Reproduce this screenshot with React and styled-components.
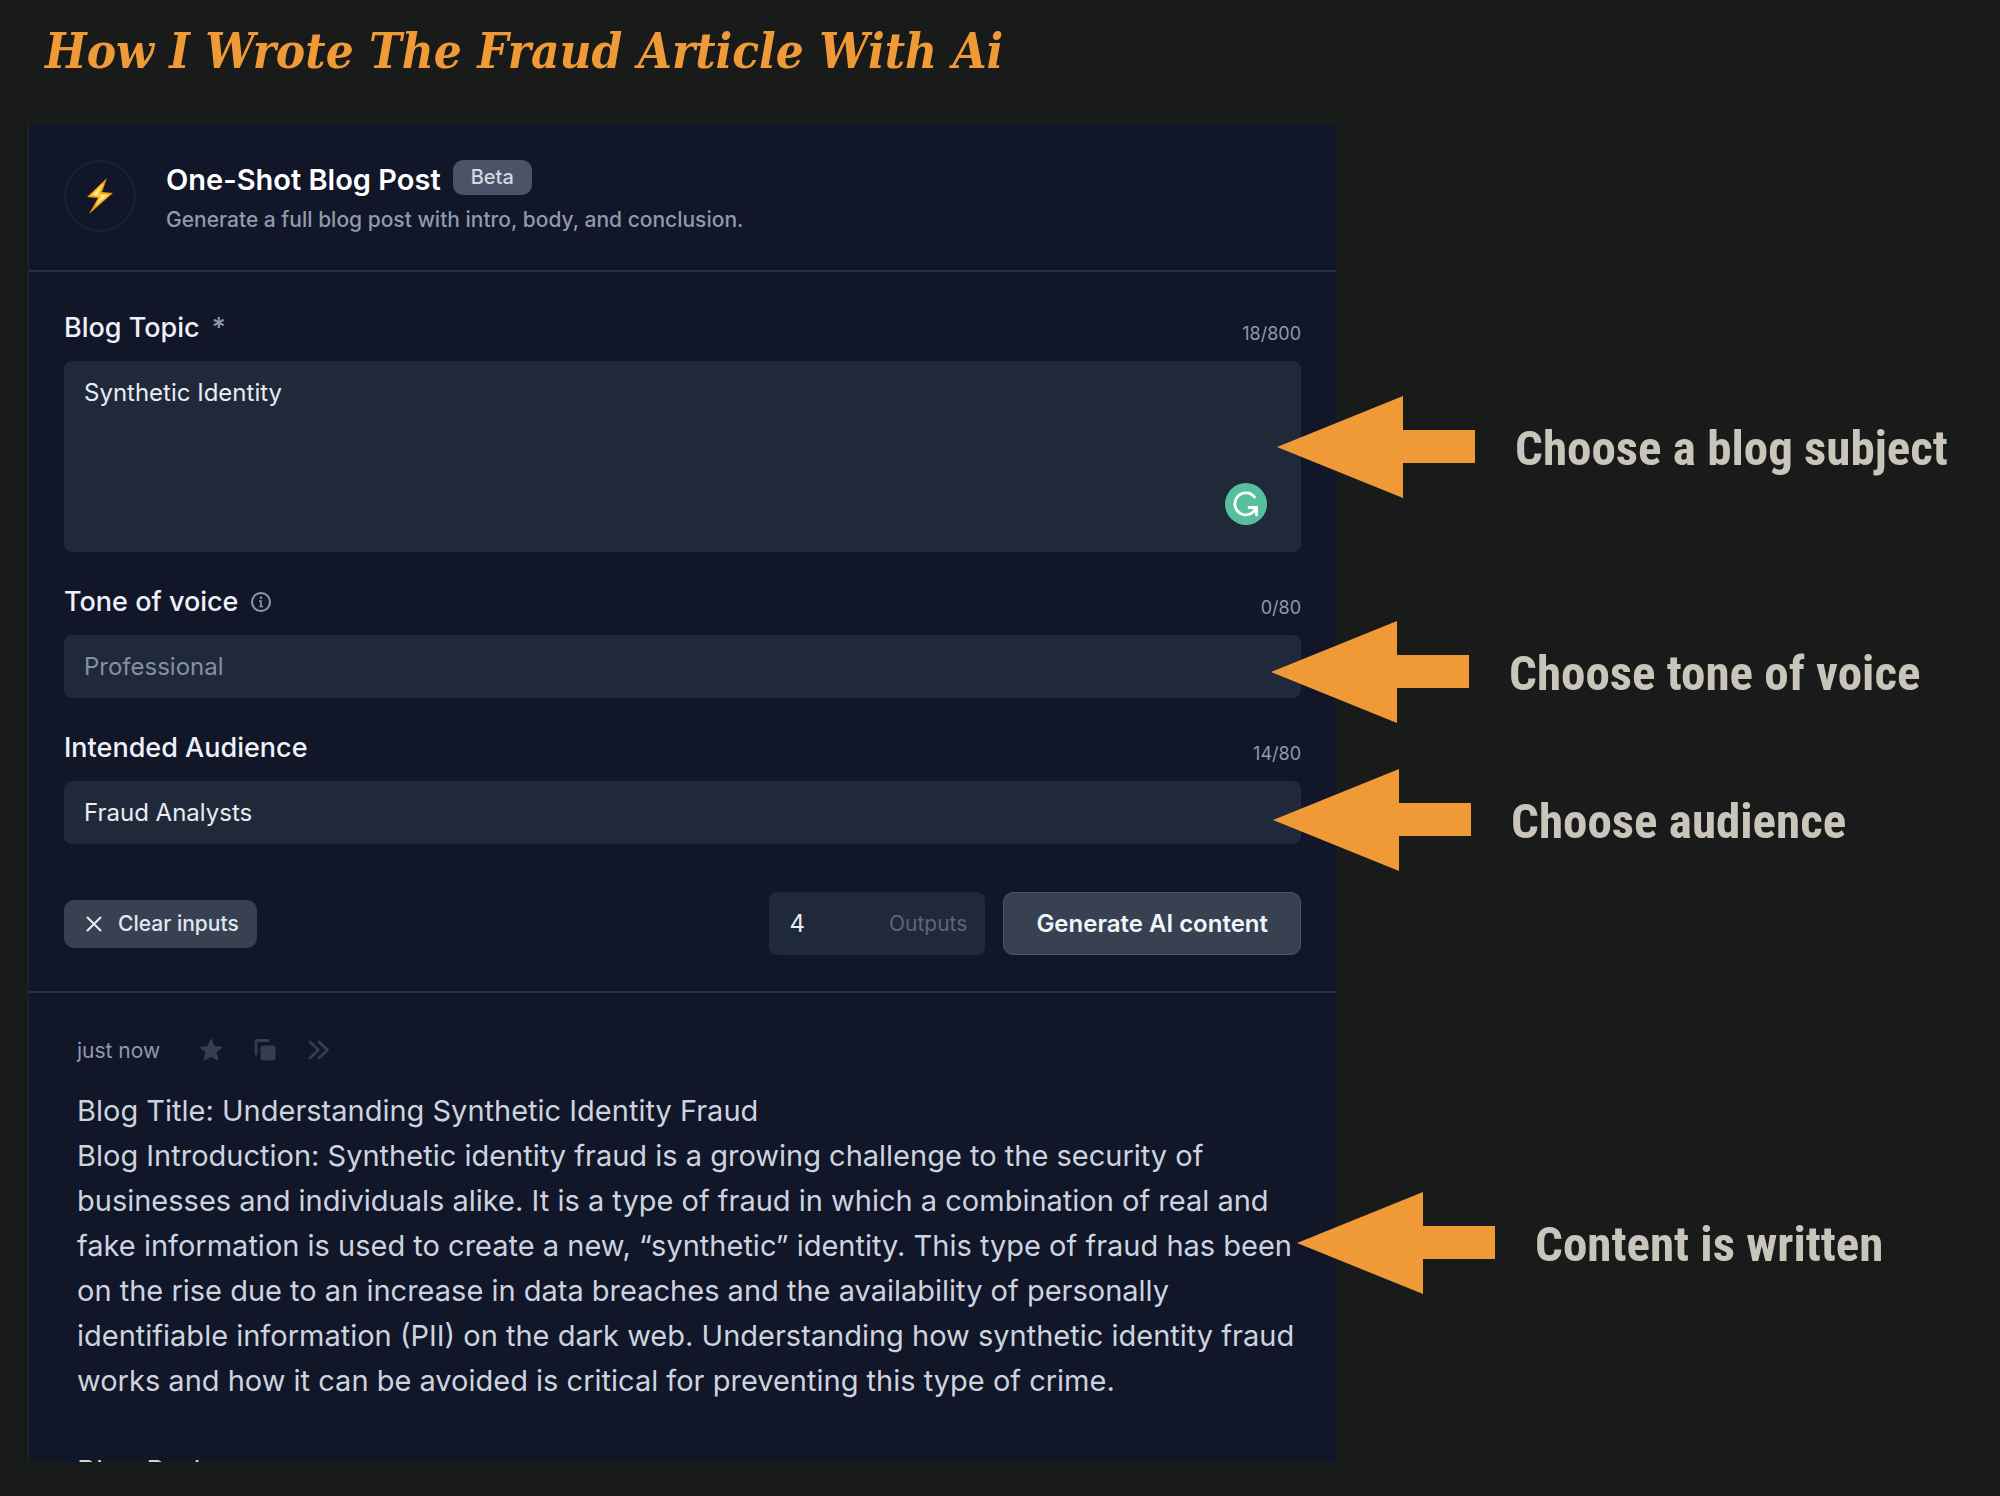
import React, { useState } from "react";
import styled, { createGlobalStyle } from "styled-components";

const callouts = [
  { text: "Choose a blog subject", top: 272, left: -59 },
  { text: "Choose tone of voice", top: 497, left: -65 },
  { text: "Choose audience", top: 645, left: -63 },
  { text: "Content is written", top: 1068, left: -39 },
];

const App = () => {
  const [topic, setTopic] = useState("Synthetic Identity");
  const [tone, setTone] = useState("");
  const [audience, setAudience] = useState("Fraud Analysts");
  const [outputs, setOutputs] = useState("4");

  const clearInputs = () => {
    setTopic("");
    setTone("");
    setAudience("");
  };

  return (
    <Page>
      <GlobalStyle />
      <PageTitle>How I Wrote The Fraud Article With Ai</PageTitle>
      <Stage>
        <Panel>
          <PanelHeader>
            <IconCircle>
              <BoltIcon />
            </IconCircle>
            <div>
              <TitleRow>
                <ToolName>One-Shot Blog Post</ToolName>
                <Badge>Beta</Badge>
              </TitleRow>
              <Description>
                Generate a full blog post with intro, body, and conclusion.
              </Description>
            </div>
          </PanelHeader>

          <Form onSubmit={(event) => event.preventDefault()}>
            <Field>
              <FieldTop>
                <Label htmlFor="topic">
                  Blog Topic <Muted>*</Muted>
                </Label>
                <Counter>{topic.length}/800</Counter>
              </FieldTop>
              <TextAreaBox>
                <TextArea
                  id="topic"
                  value={topic}
                  spellCheck={false}
                  onChange={(event) => setTopic(event.target.value)}
                />
                <CheckerButton type="button" aria-label="Check writing">
                  <CheckerIcon />
                </CheckerButton>
              </TextAreaBox>
            </Field>

            <Field>
              <FieldTop>
                <Label htmlFor="tone">
                  Tone of voice <InfoIcon />
                </Label>
                <Counter>{tone.length}/80</Counter>
              </FieldTop>
              <TextInput
                id="tone"
                placeholder="Professional"
                value={tone}
                onChange={(event) => setTone(event.target.value)}
              />
            </Field>

            <Field>
              <FieldTop>
                <Label htmlFor="audience">Intended Audience</Label>
                <Counter>{audience.length}/80</Counter>
              </FieldTop>
              <TextInput
                id="audience"
                value={audience}
                onChange={(event) => setAudience(event.target.value)}
              />
            </Field>

            <Actions>
              <ClearButton type="button" onClick={clearInputs}>
                <CloseIcon />
                Clear inputs
              </ClearButton>
              <OutputsBox>
                <OutputsInput
                  id="outputs"
                  value={outputs}
                  onChange={(event) => setOutputs(event.target.value)}
                />
                <OutputsLabel htmlFor="outputs">Outputs</OutputsLabel>
              </OutputsBox>
              <GenerateButton type="submit">Generate AI content</GenerateButton>
            </Actions>
          </Form>

          <Result>
            <ResultBar>
              <Time>just now</Time>
              <IconButton type="button" aria-label="Favorite">
                <StarIcon />
              </IconButton>
              <IconButton type="button" aria-label="Copy">
                <CopyIcon />
              </IconButton>
              <IconButton type="button" aria-label="More">
                <ChevronsIcon />
              </IconButton>
            </ResultBar>
            <ResultText>
              Blog Title: Understanding Synthetic Identity Fraud
            </ResultText>
            <ResultText>
              Blog Introduction: Synthetic identity fraud is a growing challenge
              to the security of businesses and individuals alike. It is a type
              of fraud in which a combination of real and fake information is
              used to create a new, “synthetic” identity. This type of fraud has
              been on the rise due to an increase in data breaches and the
              availability of personally identifiable information (PII) on the
              dark web. Understanding how synthetic identity fraud works and how
              it can be avoided is critical for preventing this type of crime.
            </ResultText>
            <ResultText $spaced>Blog Body:</ResultText>
          </Result>
        </Panel>

        <Notes>
          {callouts.map((callout) => (
            <Callout key={callout.text} $top={callout.top} $left={callout.left}>
              <ArrowIcon />
              <CalloutText>{callout.text}</CalloutText>
            </Callout>
          ))}
        </Notes>
      </Stage>
    </Page>
  );
};

const BoltIcon = () => (
  <svg width="28" height="38" viewBox="0 0 28 38" aria-hidden="true">
    <path d="M21 1 L1 20 L12 21 L3 37 L27 16 L16 15 Z" fill="#f39a10" />
    <path d="M17 7 L6 18 L15 19 L10 28 L22 18 L12 17 Z" fill="#fff3c0" stroke="#ffd23c" strokeWidth="1.5" />
  </svg>
);

const CheckerIcon = () => (
  <svg width="42" height="42" viewBox="0 0 42 42" fill="none" aria-hidden="true">
    <circle cx="21" cy="21" r="21" fill="#58bf9c" />
    <path
      d="M29.5 14 A11 11 0 1 0 31 25 M24 24.5 H31.5 V32"
      stroke="#fff"
      strokeWidth="2.8"
      strokeLinecap="round"
    />
  </svg>
);

const InfoIcon = () => (
  <svg width="22" height="22" viewBox="0 0 22 22" fill="none" stroke="#8f9aad" aria-hidden="true">
    <circle cx="11" cy="11" r="9" strokeWidth="2" />
    <path d="M9 10 H11 V15.5 M9.5 15.5 H13" strokeWidth="1.6" />
    <circle cx="11" cy="6.8" r="1.2" fill="#8f9aad" stroke="none" />
  </svg>
);

const CloseIcon = () => (
  <svg width="16" height="16" viewBox="0 0 16 16" fill="none" stroke="#e8ecf3" aria-hidden="true">
    <path d="M1.5 1.5 L14.5 14.5 M14.5 1.5 L1.5 14.5" strokeWidth="2" strokeLinecap="round" />
  </svg>
);

const StarIcon = () => (
  <svg width="24" height="24" viewBox="0 0 24 24" aria-hidden="true">
    <path
      d="M12 2 L14.8 9 L22 9.4 L16.4 14 L18.4 21.4 L12 17.4 L5.6 21.4 L7.6 14 L2 9.4 L9.2 9 Z"
      fill="#373d50"
      stroke="#373d50"
      strokeWidth="2"
      strokeLinejoin="round"
    />
  </svg>
);

const CopyIcon = () => (
  <svg width="24" height="24" viewBox="0 0 24 24" aria-hidden="true">
    <rect x="7.5" y="7.5" width="15" height="15" rx="3" fill="#373d50" />
    <path
      d="M3 16 V4.5 Q3 2.5 5 2.5 H15"
      fill="none"
      stroke="#373d50"
      strokeWidth="2.8"
      strokeLinecap="round"
    />
  </svg>
);

const ChevronsIcon = () => (
  <svg width="24" height="24" viewBox="0 0 24 24" aria-hidden="true">
    <path
      d="M3 4 L11.5 12 L3 20 M12 4 L20.5 12 L12 20"
      fill="none"
      stroke="#373d50"
      strokeWidth="2.8"
      strokeLinecap="round"
      strokeLinejoin="round"
    />
  </svg>
);

const ArrowIcon = () => (
  <svg width="198" height="102" viewBox="0 0 198 102" aria-hidden="true">
    <path d="M0 51 L126 0 V34 H198 V67 H126 V102 Z" fill="#f09a37" />
  </svg>
);

const GlobalStyle = createGlobalStyle`
  * {
    box-sizing: border-box;
  }

  body {
    margin: 0;
    background-color: #191b1a;
    font-family: Inter, sans-serif;
  }

  button,
  input,
  textarea {
    font-family: inherit;
  }
`;

const Page = styled.div`
  display: flex;
  flex-direction: column;
  height: 100vh;
  padding-bottom: 34px;
  overflow: hidden;
`;

const PageTitle = styled.h1`
  margin: 0;
  padding: 0 45px;
  color: #f09a37;
  font-family: "DejaVu Serif Condensed", "DejaVu Serif", serif;
  font-size: 49px;
  font-style: italic;
  font-weight: 700;
  line-height: 102px;
  height: 124px;
`;

const Stage = styled.main`
  display: grid;
  grid-template-columns: 2fr 1fr;
  flex: 1;
  min-height: 0;
  padding: 0 10px 0 28px;
`;

const Panel = styled.section`
  min-height: 0;
  overflow: hidden;
  background-color: #111628;
  border-left: 1px solid #1f2637;
`;

const PanelHeader = styled.header`
  display: flex;
  gap: 30px;
  padding: 36px 35px 34px;
  border-bottom: 2px solid #283143;
`;

const IconCircle = styled.div`
  display: flex;
  align-items: center;
  justify-content: center;
  width: 72px;
  height: 72px;
  border: 2px solid #1c2233;
  border-radius: 50%;
`;

const TitleRow = styled.div`
  display: flex;
  align-items: flex-start;
  gap: 12px;
`;

const ToolName = styled.h2`
  margin: 0;
  color: #fff;
  font-size: 29px;
  font-weight: 600;
  line-height: 40px;
`;

const Badge = styled.span`
  padding: 0 18px;
  border-radius: 10px;
  background-color: #4a5466;
  color: #d3d9e3;
  font-size: 20px;
  font-weight: 500;
  line-height: 35px;
`;

const Description = styled.p`
  margin: 4px 0 0;
  color: #8f9aad;
  font-size: 21px;
  font-weight: 500;
  line-height: 32px;
`;

const Form = styled.form`
  display: flex;
  flex-direction: column;
  gap: 30px;
  padding: 36px 35px;
  border-bottom: 2px solid #283143;
`;

const Field = styled.div`
  display: flex;
  flex-direction: column;
  gap: 13px;
`;

const FieldTop = styled.div`
  display: flex;
  align-items: flex-end;
  justify-content: space-between;
`;

const Label = styled.label`
  display: flex;
  align-items: center;
  gap: 12px;
  color: #eef1f6;
  font-size: 27px;
  font-weight: 500;
  line-height: 40px;
`;

const Muted = styled.span`
  color: #8f9aad;
`;

const Counter = styled.span`
  color: #8f9aad;
  font-size: 18px;
  line-height: 28px;
`;

const TextInput = styled.input`
  height: 63px;
  padding: 0 20px;
  border: 0;
  border-radius: 8px;
  outline: none;
  background-color: #202939;
  color: #e8ecf3;
  font-size: 24px;

  &::placeholder {
    color: #8490a3;
    opacity: 1;
  }
`;

const TextAreaBox = styled.div`
  position: relative;
  display: flex;
`;

const TextArea = styled.textarea`
  flex: 1;
  height: 191px;
  padding: 14px 20px;
  border: 0;
  border-radius: 8px;
  outline: none;
  resize: none;
  background-color: #202939;
  color: #e8ecf3;
  font-size: 24px;
  line-height: 36px;
`;

const CheckerButton = styled.button`
  position: absolute;
  right: 34px;
  bottom: 27px;
  display: flex;
  padding: 0;
  border: 0;
  border-radius: 50%;
  background: none;
`;

const Actions = styled.div`
  display: flex;
  align-items: center;
  gap: 18px;
  padding-top: 18px;
`;

const ClearButton = styled.button`
  display: flex;
  align-items: center;
  gap: 16px;
  height: 48px;
  margin-right: auto;
  padding: 0 18px 0 22px;
  border: 0;
  border-radius: 10px;
  background-color: #374152;
  color: #e2e7ef;
  font-size: 21px;
  font-weight: 500;
`;

const OutputsBox = styled.div`
  display: flex;
  align-items: center;
  width: 216px;
  height: 63px;
  padding: 0 18px 0 20px;
  border-radius: 8px;
  background-color: #202939;
`;

const OutputsInput = styled.input`
  flex: 1;
  min-width: 0;
  padding: 0;
  border: 0;
  outline: none;
  background: none;
  color: #e8ecf3;
  font-size: 24px;
`;

const OutputsLabel = styled.label`
  color: #5b667a;
  font-size: 21px;
`;

const GenerateButton = styled.button`
  height: 63px;
  padding: 0 32px;
  border: 1px solid #4b5567;
  border-radius: 10px;
  background-color: #374152;
  color: #f2f5f9;
  font-size: 24px;
  font-weight: 600;
`;

const Result = styled.article`
  padding: 37px 35px 36px 48px;
`;

const ResultBar = styled.div`
  display: flex;
  align-items: center;
  gap: 30px;
  height: 40px;
  margin-bottom: 18px;
`;

const Time = styled.time`
  margin-right: 9px;
  color: #8f9aad;
  font-size: 21px;
`;

const IconButton = styled.button`
  display: flex;
  padding: 0;
  border: 0;
  background: none;
`;

const ResultText = styled.p`
  margin: ${(props) => (props.$spaced ? "45px 0 0" : "0")};
  color: #cdd3df;
  font-size: 29px;
  line-height: 45px;
`;

const Notes = styled.aside`
  position: relative;
`;

const Callout = styled.div`
  position: absolute;
  top: ${(props) => `${props.$top}px`};
  left: ${(props) => `${props.$left}px`};
  display: flex;
  align-items: center;
  gap: 40px;
`;

const CalloutText = styled.span`
  padding-top: 2px;
  color: #c9c5bb;
  font-family: "Roboto Condensed", "Arial Narrow", sans-serif;
  font-size: 49px;
  font-weight: 700;
  white-space: nowrap;
`;

export default App;
